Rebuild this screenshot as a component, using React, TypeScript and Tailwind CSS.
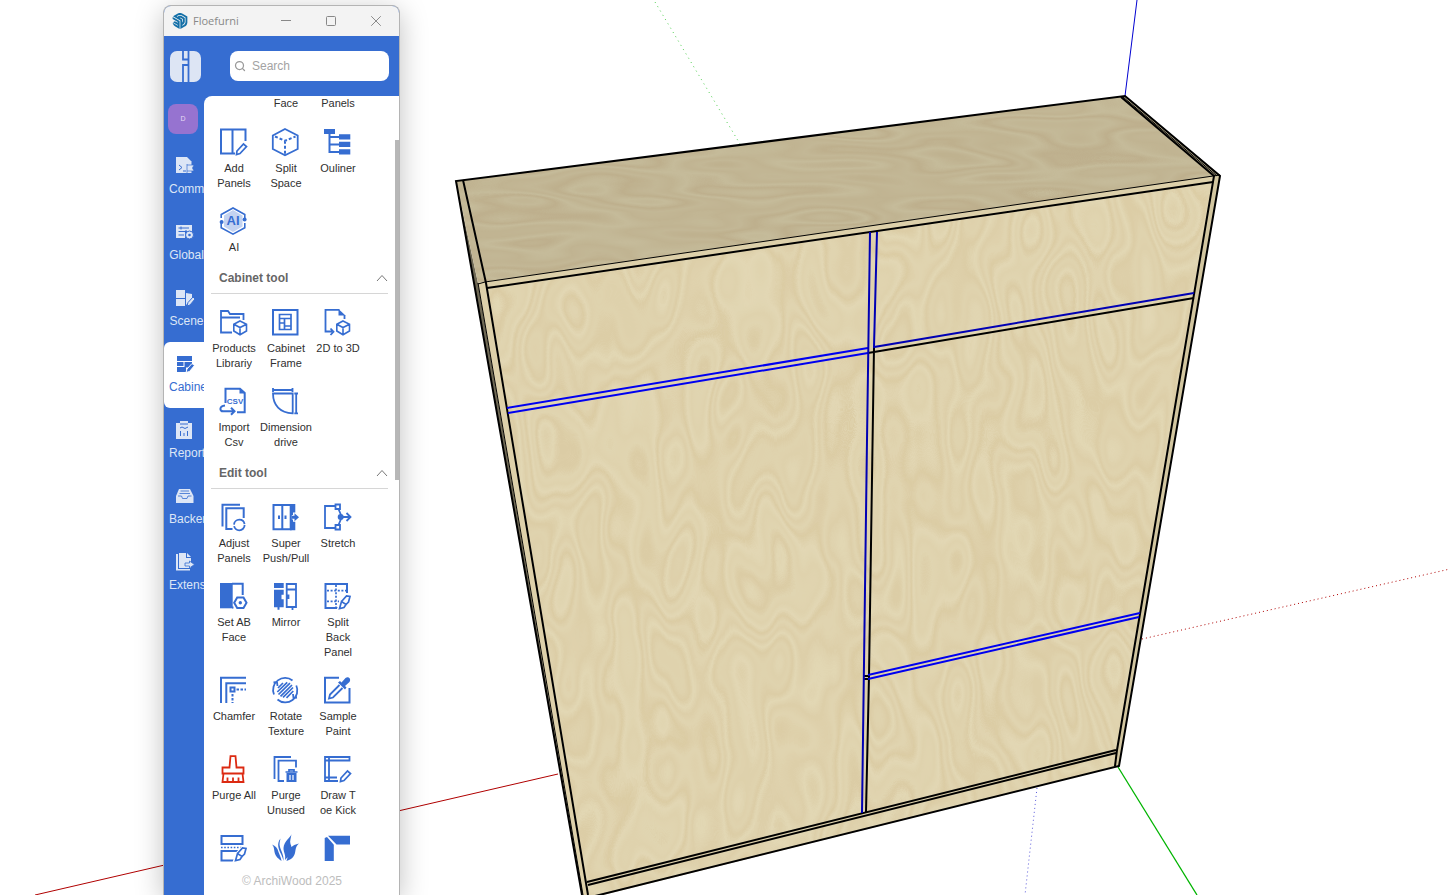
import React from 'react';
import { Search, X } from 'lucide-react';
import { SiSketchup } from 'react-icons/si';

const BLUE = '#366dd1';
const RED = '#dc2a12';

interface Tool {
  label: string;
  icon: React.ReactNode;
  color?: string;
}

const Knife = () => (
  <>
    <path d="M17 19.5L22.5 13.5H26.5V17L24 21.5L20 26L14.5 27Z" fill="#fff" stroke="#fff" strokeWidth="3" />
    <path d="M17.5 19.5L22.5 14L26 14.5L24.5 20L22 22.5L17.5 19.5L15.5 26.5L20 25.5L22 22.5" strokeWidth="1.7" />
  </>
);

const Pencil = () => <path d="M17 23L23.5 16L26.5 18.5L20 25.5L16.5 26.5Z" strokeWidth="1.7" />;

const Cube = () => (
  <path
    d="M20 13L26.5 16.2V23L20 26.8L13.8 23V16.2ZM13.8 16.2L20 19.5L26.5 16.2M20 19.5V26.8"
    strokeWidth="1.6"
    fill="#fff"
  />
);

const mainTools: Tool[] = [
  {
    label: 'Add Panels',
    icon: (
      <>
        <path d="M0 1.5H26.5M1 1.5V25.5M12.5 1.5V25.5M25.5 1.5V13M0 25.5H15" />
        <Pencil />
      </>
    ),
  },
  {
    label: 'Split Space',
    icon: (
      <>
        <path d="M13 1L25.7 7.5V21L13 27.3L.8 21V7.5Z" strokeWidth="1.8" />
        <path d="M3 8.5L13 12.8L23.5 8.5M13 12.8V27" strokeDasharray="3 2" />
      </>
    ),
  },
  {
    label: 'Ouliner',
    icon: (
      <>
        <path
          d="M0 1h11v5H0zM15 6.3h11.3v5.3H15zM15 13.7h11.3V19H15zM15 21.3h11.3v5.3H15z"
          fill="currentColor"
          stroke="none"
        />
        <path d="M5.5 5V24H15M5.5 9H15M5.5 16.4H15" />
      </>
    ),
  },
  {
    label: 'AI',
    icon: (
      <>
        <path d="M13 3L22.5 8.5V19.5L13 25L4 19.5V8.5Z" fill="#c3d3f1" stroke="none" />
        <path d="M1.2 11V7.5L13 1L24.8 7.5V11M24.8 16V20.7L13 27.2L1.2 20.7V15" strokeWidth="1.6" />
        <circle cx="1.6" cy="15" r="2" fill="currentColor" stroke="none" />
        <circle cx="24.6" cy="12.5" r="2" fill="currentColor" stroke="none" />
        <text x="13" y="18" textAnchor="middle" fontSize="13" fontWeight="bold" fill="currentColor" stroke="none">
          AI
        </text>
      </>
    ),
  },
];

const cabinetTools: Tool[] = [
  {
    label: 'Products Librariy',
    icon: (
      <>
        <path d="M12 24.5H1V3H8L10 6H23.5V12M1 9.5H20" strokeWidth="1.8" />
        <Cube />
      </>
    ),
  },
  {
    label: 'Cabinet Frame',
    icon: (
      <>
        <path d="M1 2H25.5V26.5H1Z" />
        <path d="M7.5 6.5H19V21.5H7.5ZM7.5 10.5H19M12.5 10.5V21.5M7.5 15H12.5M12.5 18H19" strokeWidth="1.7" />
      </>
    ),
  },
  {
    label: '2D to 3D',
    icon: (
      <>
        <path d="M15.5 1.8H1.5V23.5H8M6.5 20.5L9.5 23.8L6.5 27M20.5 11V7" strokeWidth="1.8" />
        <path d="M14.5 1L21.5 7.5H14.5Z" fill="currentColor" stroke="none" />
        <g transform="translate(-1 0)">
          <Cube />
        </g>
      </>
    ),
  },
  {
    label: 'Import Csv',
    icon: (
      <>
        <path d="M5.500 16V1.800H20L24.700 6V25.200H17M5 18.500C-1 19-.5 24.300 3 24.300H14M11 20.800L14.500 24.300L11 27.800" />
        <path d="M19.500 1.500V6.500H24.500Z" fill="currentColor" stroke="none" />
        <text x="15" y="17" textAnchor="middle" fontSize="8" fontWeight="bold" fill="currentColor" stroke="none">
          CSV
        </text>
      </>
    ),
  },
  {
    label: 'Dimension drive',
    icon: (
      <path
        d="M1 6.500H20.700V26.300C8 26 1 18 1 6.500ZM1 3H20.500M1 1V5M20.500 1V5M24.200 6.500V26.300M22.300 6.500H26M22.300 26.300H26"
        strokeWidth="1.8"
      />
    ),
  },
];

const editTools: Tool[] = [
  {
    label: 'Adjust Panels',
    icon: (
      <>
        <path d="M20 1.800H2.500V23.500M12.500 26H6.300V5.200H23.700V15" />
        <circle cx="19.300" cy="22" r="5.300" strokeDasharray="15 1.600" strokeWidth="1.8" />
      </>
    ),
  },
  {
    label: 'Super Push/Pull',
    icon: (
      <>
        <path d="M1.500 2H18.700V26.300H1.500ZM10.300 2V26.300" />
        <path
          d="M6 12.500h2v3.500H6zM12.500 12.500h2v3.500h-2zM18 1h5.300v8.500L21 9.500V12h-1.500v4.500H21v2.300h2.300v8.500H18z"
          fill="currentColor"
          stroke="none"
        />
        <path d="M20 12.700h2.500v-2.500l4.500 4l-4.500 4v-2.500H20z" fill="currentColor" stroke="none" />
      </>
    ),
  },
  {
    label: 'Stretch',
    icon: (
      <>
        <path
          d="M11 3H1V25H11M11.500 1.500H16V6H11.500ZM11.500 22H16V26.500H11.500ZM14.500 6L17 12M14.500 22L17 16M17 14H26M22.500 10L26.500 14L22.500 18"
          strokeWidth="1.8"
        />
        <circle cx="16.700" cy="14" r="3" fill="currentColor" stroke="none" />
      </>
    ),
  },
  {
    label: 'Set AB Face',
    icon: (
      <>
        <path d="M0 1H12.700V26.300H0Z" fill="currentColor" stroke="none" />
        <path d="M12 1.800H22.700V13M12 25.500H13.500" />
        <path d="M17.200 15.500H23.500L26.500 20.800L23.500 26H17.200L14.200 20.800Z" />
        <circle cx="20.300" cy="20.800" r="1.700" fill="currentColor" stroke="none" />
      </>
    ),
  },
  {
    label: 'Mirror',
    icon: (
      <>
        <path
          d="M2 1h9.700v5H2zM2 7.700h9.700v5H9.500v4.500h2.200v8.100H7.500v2.500H5.500v-2.500H2z"
          fill="currentColor"
          stroke="none"
        />
        <path d="M14.700 2H24V25H14.700ZM14.700 7.500H24M20.500 25V28M16.500 12.500V17" strokeWidth="1.8" />
      </>
    ),
  },
  {
    label: 'Split\nBack\nPanel',
    icon: (
      <>
        <path d="M23 11V2H1.500V26H14" />
        <path d="M3 8.700H23M3 19.300H15M12 3V26" strokeDasharray="2 1.600" strokeWidth="1.7" />
        <Knife />
      </>
    ),
  },
  {
    label: 'Chamfer',
    icon: (
      <>
        <path d="M26 1.800H1V27M26 7.300H6.300V27M10.500 11.500H14.500V15.500H10.500Z" />
        <path d="M16.500 13.500H26M12.500 18V27" strokeDasharray="2.500 1.500" />
      </>
    ),
  },
  {
    label: 'Rotate Texture',
    icon: (
      <>
        <path d="M2 18.500A12 12 0 0 1 20.500 4.500M24.300 9.500A12 12 0 0 1 5.500 23.500M1.500 6.500L5 6L5.500 10M25 21.500L21.500 22L21 18" strokeWidth="1.8" />
        <path
          d="M6 12L11 7M5.300 16L15.200 6.300M6.500 18.500L18 7.200M8.500 20.300L20 9M11 21.300L21 11.500M14.500 21.800L21.300 15"
          strokeWidth="1.7"
        />
      </>
    ),
  },
  {
    label: 'Sample Paint',
    icon: (
      <>
        <path d="M15 1.800H1V26.500H25.500V12" />
        <path d="M15.500 9L6 18.500L5 22.500L9 21.500L18.500 12" strokeWidth="1.8" />
        <path
          d="M14 6.500l2-1.500 1.500 1.500 4-4.500c3-2 6 1 4 4l-4.500 4 1.500 1.500-1.500 2z"
          fill="currentColor"
          stroke="none"
        />
      </>
    ),
  },
  {
    label: 'Purge All',
    color: RED,
    icon: (
      <path
        d="M9.500 12.500L10.500 1.200H15.500L16.500 12.500H23.500V18.500H2.500V12.500ZM3.500 18.500L2.500 27H23.500L22.500 18.500M7.500 27V22.500M13 27V22.500M18.500 27V22.500"
        strokeWidth="1.8"
      />
    ),
  },
  {
    label: 'Purge Unused',
    icon: (
      <>
        <path d="M19 2H2.500V24M12 26H6.500V5.700H24V12.500" strokeWidth="1.8" />
        <path d="M13.500 17H25.500M17 16.500V14.800H22V16.500" strokeWidth="1.7" />
        <path d="M14.500 18h10v9h-10z" fill="currentColor" stroke="none" />
        <path d="M18 20V25M21 20V25" stroke="#fff" strokeWidth="1.2" />
      </>
    ),
  },
  {
    label: 'Draw T\noe Kick',
    icon: (
      <>
        <path d="M14 26H1V2H25.500V5.500H1M5 2V26M1 22.500H13" strokeWidth="1.8" />
        <Pencil />
      </>
    ),
  },
  {
    label: '',
    icon: (
      <>
        <path d="M1.500 2H22.500V10H1.500ZM20 17H1.500V26.500H14" />
        <path d="M1 13.500H24" strokeDasharray="1.600 1.600" strokeWidth="1.7" />
        <Knife />
      </>
    ),
  },
  {
    label: '',
    icon: (
      <path
        d="M19.500 0C19 3 12 7 11.500 14C11.500 19 14 20 13 26C21 18 20 13 18.500 10C17.500 7 19 4 19.500 0ZM27 9.500C20 11 16 15 16 20C16 23 15 25 14.500 27C22 25 23 20 23.500 16C24 13 25 11 27 9.500ZM8.500 4.500C4 10 7 16 9 20C10 22 11 25 11.500 27C12 21 9 17 8 13C7 10 8 7 8.500 4.500ZM0 10.500C2 12 2 15 2.500 18C3.500 23 7 25 9.500 27C9 23 7.500 21 6.500 18C5.500 14 3.500 12 0 10.500Z"
        fill="currentColor"
        stroke="none"
      />
    ),
  },
  {
    label: '',
    icon: (
      <path d="M4 1.700H26V10.500H12.500ZM.700 4L3 3L9.800 10.800V27H.700Z" fill="currentColor" stroke="none" />
    ),
  },
];

const navItems = [
  {
    label: 'Comm',
    icon: (
      <>
        <path d="M0 0H11L15.500 4.500V16H0Z" />
        <path d="M3 8L6 10.500L3 13M7 14H10" stroke={BLUE} fill="none" />
        <path d="M11 7V17.500M11 8H18L16.500 11L18 14H11" stroke={BLUE} strokeWidth=".7" />
      </>
    ),
  },
  {
    label: 'Global',
    icon: (
      <>
        <path d="M0 2H16V9H0ZM0 8H9V15H0Z" />
        <path d="M2.500 5H13M2.500 8.500H11M2.500 12H8M5 3.500V6.500M10 7V10" stroke={BLUE} fill="none" />
        <circle cx="13.500" cy="12" r="4" stroke={BLUE} />
        <circle cx="13.500" cy="12" r="1.300" fill={BLUE} />
      </>
    ),
  },
  {
    label: 'Scene',
    icon: (
      <>
        <path d="M0 1H9V9H0ZM0 10H9V17H0ZM10 4L16 5V10L10 16Z" />
        <path d="M11 17L12 13.500L17 8L19 10L14 16Z" stroke={BLUE} />
      </>
    ),
  },
  {
    label: 'Cabine',
    icon: (
      <>
        <path d="M1 1H16V6H1ZM1 7H7.500V11H1ZM8.500 7H16V11L13 12.500H8.500ZM1 12H10V17H1Z" />
        <path d="M10 17.500L11 14L16 8.500L18.500 10.500L13.500 16.500Z" stroke="#fff" />
      </>
    ),
  },
  {
    label: 'Report',
    icon: (
      <>
        <path d="M0 2H4V0H12V2H16V18H0Z" />
        <path d="M4 3H12M4 7L6 6L9 7.500L12 6M4.500 10V15M8 12V15M11.500 10V15" stroke={BLUE} fill="none" />
      </>
    ),
  },
  {
    label: 'Backer',
    icon: (
      <>
        <path d="M3 2H14L17.500 9V16H0V9Z" />
        <path d="M2 9H5.500L6.500 11.500H11L12 9H15.500M4.500 4H13M3.500 6.500H14" stroke={BLUE} strokeWidth=".8" fill="none" />
      </>
    ),
  },
  {
    label: 'Extens',
    icon: (
      <>
        <path d="M3 0H10V5H15V15H3ZM0 1H2V16H14V17.500H0ZM11 0L15 4H11Z" />
        <path d="M9 10H13.500V8L18.500 11.500L13.500 15V13H9Z" stroke={BLUE} strokeWidth=".8" />
      </>
    ),
  },
];

const ToolGrid = ({ tools }: { tools: Tool[] }) => (
  <div className="grid grid-cols-[52px_52px_52px] pl-1">
    {tools.map((tool, i) => (
      <button
        key={i}
        aria-label={tool.label || 'Tool'}
        className="flex flex-col items-center pb-4 text-[11px] leading-[15px] text-[#303030]"
      >
        <svg
          viewBox="0 0 28 28"
          className="w-7 h-7 mb-[5px] shrink-0 overflow-visible"
          fill="none"
          stroke="currentColor"
          strokeWidth="2"
          color={tool.color || BLUE}
        >
          {tool.icon}
        </svg>
        <span className="w-[52px] text-center whitespace-pre-line">{tool.label}</span>
      </button>
    ))}
  </div>
);

const SectionHeader = ({ title }: { title: string }) => (
  <button className="w-[177px] ml-[7px] mb-3.5 pl-2 pb-2 flex items-center justify-between border-b border-[#d6d6d6] text-xs leading-[14px] font-bold text-[#666]">
    {title}
    <svg viewBox="0 0 12 8" className="w-3 h-2" fill="none" stroke="#777">
      <path d="M1 7L6 1.500L11 7" />
    </svg>
  </button>
);

const Scene = () => (
  <svg viewBox="0 0 1450 895" preserveAspectRatio="xMidYMid slice" className="w-full h-full" fill="none">
    <defs>
      <filter id="grain" x="0" y="0" width="100%" height="100%" colorInterpolationFilters="sRGB">
        <feTurbulence type="fractalNoise" baseFrequency="0.018 0.008" numOctaves="2" seed="8" />
        <feColorMatrix values="0 0 0 0 .76  0 0 0 0 .64  0 0 0 0 .42  1 0 0 0 0" />
        <feComponentTransfer>
          <feFuncA
            type="table"
            tableValues="0 .2 .03 .14 .05 .22 0 .12 .08 .2 0 .16 .05 .22 0 .1 .05 .22 0 .14 .08 .2 0 .2 0"
          />
        </feComponentTransfer>
      </filter>
      <filter id="topGrain" x="0" y="0" width="100%" height="100%" colorInterpolationFilters="sRGB">
        <feTurbulence type="fractalNoise" baseFrequency="0.007 0.035" numOctaves="2" seed="3" />
        <feColorMatrix values="0 0 0 0 .68  0 0 0 0 .58  0 0 0 0 .43  1 0 0 0 0" />
        <feComponentTransfer>
          <feFuncA type="table" tableValues="0 .25 0 .2 .05 .3 0 .2 .1 .3 0 .25 .05 .2 0" />
        </feComponentTransfer>
      </filter>
      <clipPath id="front">
        <path d="M478 283L1220 175L1119 766L583 900Z" />
      </clipPath>
      <clipPath id="top">
        <path d="M456 181L1125 96L1220 175L478 283Z" />
      </clipPath>
    </defs>

    {/* axes */}
    <path d="M35 895L558 774" stroke="#b00000" />
    <path d="M1142 639L1450 569" stroke="#b00000" strokeDasharray="1 3" />
    <path d="M1118 767L1197 895" stroke="#00b400" strokeWidth="1.3" />
    <path d="M655 2L740 144" stroke="#4ccf4c" strokeDasharray="1 4" />
    <path d="M1137 0L1125 96" stroke="#0000d0" />
    <path d="M1037 788L1025 895" stroke="#5a5adc" strokeDasharray="1 3" />

    {/* faces */}
    <path d="M456 181L478 283L583 895H582Z" fill="#6f6955" />
    <path d="M478 283L1220 175L1119 766L583 900Z" fill="#e2d7b4" />
    <g clipPath="url(#front)">
      <rect x="470" y="170" width="760" height="730" filter="url(#grain)" />
    </g>
    <path d="M456 181L1125 96L1220 175L478 283Z" fill="#c5bb9a" />
    <g clipPath="url(#top)">
      <rect x="450" y="90" width="775" height="200" filter="url(#topGrain)" />
    </g>
    <path d="M478 283L1214 176L1213 182L487 288L588 895H583Z" fill="#ddd0aa" />
    <path d="M1214 176L1220 175L1119 766H1114Z" fill="#d2c6a0" />

    {/* thin edges */}
    <path d="M478 284L485 282L1220 175M478 283L583 895" stroke="#000" />

    {/* heavy edges */}
    <g stroke="#000" strokeWidth="2">
      <path d="M582 895L456 181L1125 96L1220 176L1119 766L583 899" />
      <path d="M463 180L486 283L588 895" />
      <path d="M1121 97L1214 176L1117 750L1115 766" />
      <path d="M487 288L1213 182" />
      <path d="M587 882L1116 750M588 885L1116 753" />
      <path d="M874 347L869 676L866 812M868 353L1194 298" />
      <path d="M864 676H869M864 679H869" />
    </g>
    <path d="M1123 97L1217 176" stroke="#000" />

    {/* divider and shelves */}
    <g stroke="#0000f0" strokeWidth="2">
      <path d="M507 408L868 348M508 413L868 353" />
      <path d="M868 675L1140 613M868 679L1139 617" />
    </g>
    <g stroke="#0000b4" strokeWidth="2">
      <path d="M870 232L867 440L862 813" />
      <path d="M877 232L874 347L1194 293" />
    </g>
  </svg>
);

const TitleBar = () => (
  <div className="h-[30px] shrink-0 flex items-center bg-[#f3f3f3] pl-2 text-[#888]">
    <SiSketchup className="w-4 h-4 text-[#1470a8]" />
    <span className="ml-[5px] flex-1 font-['Open_Sans',sans-serif] text-[11px]">Floefurni</span>
    <button aria-label="Minimize" className="w-[45px] flex justify-center">
      <svg viewBox="0 0 10 10" className="w-2.5 h-2.5" stroke="currentColor">
        <path d="M0 4.5H10" />
      </svg>
    </button>
    <button aria-label="Maximize" className="w-[45px] flex justify-center">
      <svg viewBox="0 0 10 10" className="w-2.5 h-2.5" stroke="currentColor" fill="none">
        <rect x=".5" y=".5" width="9" height="9" rx="1" />
      </svg>
    </button>
    <button aria-label="Close" className="w-[46px] flex justify-center">
      <X className="w-[18px] h-[18px]" strokeWidth={1.3} />
    </button>
  </div>
);

const Header = () => (
  <div className="h-[60px] shrink-0 flex items-center justify-between pl-1.5 pr-2.5">
    <svg viewBox="0 0 31 31" className="w-[31px] h-[31px]">
      <rect width="31" height="31" rx="7" fill="#dde5f4" />
      <path d="M13 0V8.500H18.500M18.500 14H13V31M18.500 0V31" fill="none" stroke={BLUE} strokeWidth="1.8" />
    </svg>
    <label className="w-[159px] h-[30px] flex items-center gap-1.5 rounded-lg bg-white px-1">
      <Search className="w-3 h-3 shrink-0 text-[#999]" strokeWidth={2.5} />
      <input
        type="text"
        placeholder="Search"
        aria-label="Search"
        className="min-w-0 flex-1 text-xs outline-none placeholder:text-[#a3a3a3]"
      />
    </label>
  </div>
);

const Sidebar = () => (
  <nav className="w-10 shrink-0 overflow-hidden">
    <button className="mt-2 ml-1 mb-2.5 flex w-[30px] h-[30px] items-center justify-center rounded-lg bg-[#9673d0] text-[7px] text-[#e4daf4]">
      D
    </button>
    {navItems.map((item) => {
      const active = item.label === 'Cabine';
      return (
        <button
          key={item.label}
          className={
            active
              ? 'w-10 h-[66px] pt-[13px] flex flex-col gap-1.5 overflow-hidden rounded-l-md bg-white text-[#366dd1]'
              : 'w-10 h-[66px] pt-[13px] flex flex-col gap-1.5 overflow-hidden text-[#dde6f6]'
          }
        >
          <svg viewBox="0 0 19 18" className="ml-3 w-[19px] h-[18px] shrink-0" fill="currentColor">
            {item.icon}
          </svg>
          <span className="pl-[5px] text-xs whitespace-nowrap">{item.label}</span>
        </button>
      );
    })}
  </nav>
);

export default function App() {
  return (
    <main className="relative h-screen overflow-hidden bg-white font-['Liberation_Sans',Arial,sans-serif]">
      <Scene />
      <section className="absolute left-[163px] top-[5px] bottom-0 w-[237px] flex flex-col overflow-hidden rounded-t-lg border border-b-0 border-[#b4b4b4] bg-[#366dd1] shadow-[0_6px_28px_rgba(0,0,0,0.25)]">
        <TitleBar />
        <Header />
        <div className="min-h-0 flex-1 flex">
          <Sidebar />
          <div className="min-w-0 flex-1 flex flex-col rounded-tl-lg bg-white">
            <div className="min-h-0 flex-1 flex overflow-hidden">
              <div className="flex-1">
                <div className="grid grid-cols-[52px_52px_52px] pl-1 pb-[17px] text-center text-[11px] leading-[15px] text-[#303030]">
                  <span className="col-start-2">Face</span>
                  <span>Panels</span>
                </div>
                <ToolGrid tools={mainTools} />
                <SectionHeader title="Cabinet tool" />
                <ToolGrid tools={cabinetTools} />
                <SectionHeader title="Edit tool" />
                <ToolGrid tools={editTools} />
              </div>
              <div className="w-1 h-[340px] mt-11 bg-[#b7b7b7]" />
            </div>
            <footer className="h-[30px] shrink-0 pl-[38px] pt-2 text-xs text-[#bdbdbd]">© ArchiWood 2025</footer>
          </div>
        </div>
      </section>
    </main>
  );
}
